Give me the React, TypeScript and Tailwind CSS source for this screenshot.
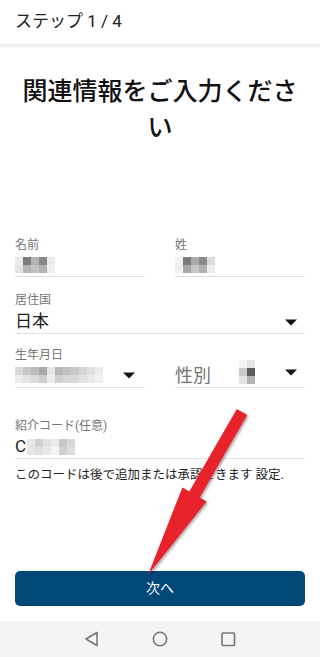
const font = { fontFamily: 'Roboto, "Noto Sans CJK JP", sans-serif' };

function Mosaic({ rows }: { rows: string[][] }) {
  return (
    <div className="flex flex-col">
      {rows.map((r, i) => (
        <div key={i} className="flex">
          {r.map((c, j) => (
            <div key={j} className="w-[8px] h-[8px]" style={{ backgroundColor: c }} />
          ))}
        </div>
      ))}
    </div>
  );
}

function Caret() {
  return (
    <svg width="12" height="7" viewBox="0 0 12 7">
      <path d="M0 0.5 L12 0.5 L6 6.5 Z" fill="#111" />
    </svg>
  );
}

export default function App() {
  return (
    <div className="relative h-[657px] w-[320px] flex flex-col bg-white text-[#212121] overflow-hidden" style={font}>
      {/* header */}
      <div className="h-[45px] flex items-center px-[15px] text-[17px] shadow-[0_1px_3px_rgba(0,0,0,0.12)] border-b border-[#eeeeee]">
        ステップ 1 / 4
      </div>

      <h1 className="mt-[29px] px-[15px] text-center text-[25px] leading-[36px] font-medium text-[#111]">
        関連情報をご入力ください
      </h1>

      <div className="px-[15px] mt-[91px] flex flex-col">
        {/* name row */}
        <div className="flex gap-[30px]">
          <div className="flex-1">
            <div className="text-[12px] leading-[16px] text-[#757575]">名前</div>
            <div className="h-[24px] flex items-center border-b border-[#e0e0e0]">
              <Mosaic
                rows={[
                  ['#ececec', '#7d7d7d', '#b3b3b3', '#888', '#ececec'],
                  ['#e4e4e4', '#b5b5b5', '#c3c3c3', '#b5b5b5', '#f0f0f0'],
                ]}
              />
            </div>
          </div>
          <div className="flex-1">
            <div className="text-[12px] leading-[16px] text-[#757575]">姓</div>
            <div className="h-[24px] flex items-center border-b border-[#e0e0e0]">
              <Mosaic
                rows={[
                  ['#f0f0f0', '#7a7a7a', '#aaa', '#8a8a8a', '#dcdcdc'],
                  ['#f0f0f0', '#a9a9a9', '#c6c6c6', '#b0b0b0', '#ececec'],
                ]}
              />
            </div>
          </div>
        </div>

        {/* country */}
        <div className="mt-[15px]">
          <div className="text-[12px] leading-[16px] text-[#757575]">居住国</div>
          <div className="h-[26px] flex items-center justify-between border-b border-[#e0e0e0] pr-[8px] pt-[3px]">
            <span className="text-[17px]">日本</span>
            <Caret />
          </div>
        </div>

        {/* birthday / gender */}
        <div className="flex gap-[30px] mt-[13px]">
          <div className="flex-1">
            <div className="text-[12px] leading-[16px] text-[#757575]">生年月日</div>
            <div className="h-[25px] flex items-center justify-between border-b border-[#e0e0e0] pr-[10px]">
              <Mosaic
                rows={[
                  ['#d8d8d8', '#c8c8c8', '#bdbdbd', '#a8a8a8', '#e6e6e6', '#b7b7b7', '#c2c2c2', '#c9c9c9', '#d5d5d5', '#e0e0e0', '#ececec'],
                  ['#ebebeb', '#e2e2e2', '#dcdcdc', '#cfcfcf', '#ececec', '#d0d0d0', '#d8d8d8', '#dadada', '#e3e3e3', '#e8e8e8', '#f2f2f2'],
                ]}
              />
              <Caret />
            </div>
          </div>
          <div className="flex-1">
            <div className="h-[41px] flex items-end justify-between border-b border-[#e0e0e0] pr-[8px]">
              <span className="text-[18px] leading-[22px] text-[#757575]">性別</span>
              <div className="flex items-center gap-[30px] pb-[3px]">
                <Mosaic
                  rows={[
                    ['#f3f3f3', '#e4e4e4'],
                    ['#c8c8c8', '#5e5e5e'],
                    ['#e2e2e2', '#b4b4b4'],
                  ]}
                />
                <Caret />
              </div>
            </div>
          </div>
        </div>

        {/* referral */}
        <div className="mt-[30px]">
          <div className="text-[12px] leading-[16px] text-[#757575]">紹介コード(任意)</div>
          <div className="h-[25px] flex items-center border-b border-[#e0e0e0] pt-[2px]">
            <span className="text-[17px] mr-[1px]">C</span>
            <Mosaic
              rows={[
                ['#e8e8e8', '#d2d2d2', '#e2e2e2', '#ececec', '#c8c8c8', '#d8d8d8'],
                ['#e6e6e6', '#e0e0e0', '#e8e8e8', '#f4f4f4', '#d0d0d0', '#dcdcdc'],
              ]}
            />
          </div>
        </div>

        <p className="mt-[7px] text-[12.5px] leading-[18px] text-[#222]">
          このコードは後で追加または承認できます 設定.
        </p>
      </div>

      <div className="flex-1" />

      <button className="mx-[15px] h-[35px] rounded-[5px] bg-[#004878] text-white text-[14px]">
        次へ
      </button>

      <div className="mt-[15px] h-[36px] bg-[#f4f4f4] flex items-center justify-center gap-[50px]">
        <svg width="18" height="18" viewBox="0 0 18 18">
          <path d="M14 2.5 L14 15.5 L3 9 Z" fill="none" stroke="#777" strokeWidth="1.6" strokeLinejoin="round" />
        </svg>
        <svg width="18" height="18" viewBox="0 0 18 18">
          <circle cx="9" cy="9" r="6.7" fill="none" stroke="#777" strokeWidth="1.6" />
        </svg>
        <svg width="18" height="18" viewBox="0 0 18 18">
          <rect x="3" y="3" width="12.5" height="12.5" rx="1" fill="none" stroke="#777" strokeWidth="1.6" />
        </svg>
      </div>

      {/* red arrow overlay */}
      <svg className="absolute left-0 top-0 pointer-events-none" width="320" height="657" viewBox="0 0 320 657">
        <defs>
          <filter id="sh" x="-20%" y="-20%" width="140%" height="140%">
            <feDropShadow dx="1.5" dy="1.5" stdDeviation="1.2" floodColor="#000" floodOpacity="0.35" />
          </filter>
        </defs>
        <polygon
          points="236.8,409 247.2,415 199.7,497.4 206.6,501.4 148,575 182.4,487.4 189.3,491.4"
          fill="#e8202a"
          filter="url(#sh)"
        />
      </svg>
    </div>
  );
}
